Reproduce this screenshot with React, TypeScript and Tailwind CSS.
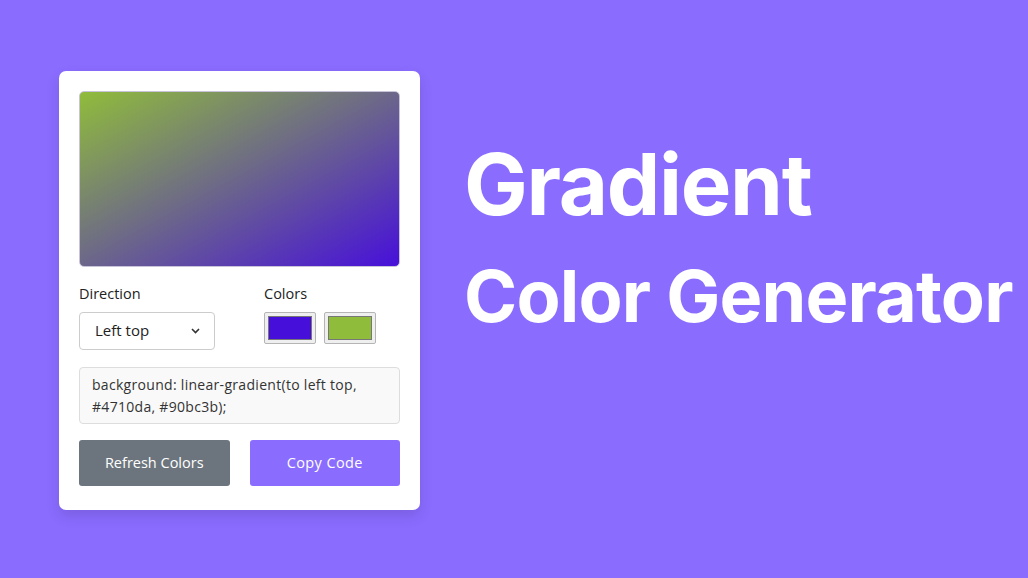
import * as React from "react";

const cardFont = { fontFamily: '"Open Sans", "Noto Sans", sans-serif' };

function Swatch({ color }: { color: string }) {
    return (
        <div className="flex h-[32px] w-[52px] rounded-[2px] border border-[#b5b5b5] bg-[#efefef] p-[3px]">
            <div className="h-full w-full border border-[#777]" style={{ background: color }} />
        </div>
    );
}

export default function App() {
    const [direction] = React.useState("Left top");

    return (
        <div className="flex h-[578px] w-full items-center bg-[#8a6cff] pl-[59px]" style={cardFont}>
            <div className="mt-[2px] w-[361px] rounded-[7px] bg-white px-[20px] pt-[20px] pb-[24px] shadow-[0_6px_14px_rgba(0,0,0,0.12)]">
                <div className="h-[176px] w-full rounded-[5px] border border-[#c9c3d9] bg-[linear-gradient(to_left_top,#4710da,#90bc3b)]" />

                <div className="mt-[16px] flex">
                    <div className="flex w-[185px] flex-col">
                        <span className="text-[14.5px] leading-[22px] text-[#222]">Direction</span>
                        <div className="mt-[7px] flex h-[38px] w-[136px] items-center justify-between rounded-[4px] border border-[#ccc] pl-[15px] pr-[14px] text-[15px] text-[#222]">
                            <span>{direction}</span>
                            <svg width="9" height="6" viewBox="0 0 9 6" fill="none">
                                <path d="M1 1l3.5 3.5L8 1" stroke="#333" strokeWidth="1.6" />
                            </svg>
                        </div>
                    </div>
                    <div className="flex flex-col">
                        <span className="text-[14.5px] leading-[22px] text-[#222]">Colors</span>
                        <div className="mt-[7px] flex gap-[8px]">
                            <Swatch color="#4710da" />
                            <Swatch color="#90bc3b" />
                        </div>
                    </div>
                </div>

                <div className="mt-[17px] h-[57px] rounded-[4px] border border-[#ddd] bg-[#f9f9f9] px-[12px] py-[6px] text-[14px] leading-[22px] tracking-[0.3px] text-[#333]">
                    background: linear-gradient(to left top, #4710da, #90bc3b);
                </div>

                <div className="mt-[16px] flex gap-[20px]">
                    <button
                        type="button"
                        className="h-[46px] flex-1 rounded-[3px] bg-[#6c757d] text-[14.5px] text-white"
                    >
                        Refresh Colors
                    </button>
                    <button
                        type="button"
                        className="h-[46px] flex-1 rounded-[3px] bg-[#8a6cff] text-[14.5px] tracking-[0.4px] text-white"
                    >
                        Copy Code
                    </button>
                </div>
            </div>

            <div
                className="mb-[102px] ml-[44px] flex flex-col font-bold text-white"
                style={{ fontFamily: "Inter, sans-serif" }}
            >
                <span className="text-[85px] leading-[100px] tracking-[-1.3px]">Gradient</span>
                <span className="mt-[16px] text-[72px] leading-[90px] tracking-[-0.85px]">Color Generator</span>
            </div>
        </div>
    );
}
